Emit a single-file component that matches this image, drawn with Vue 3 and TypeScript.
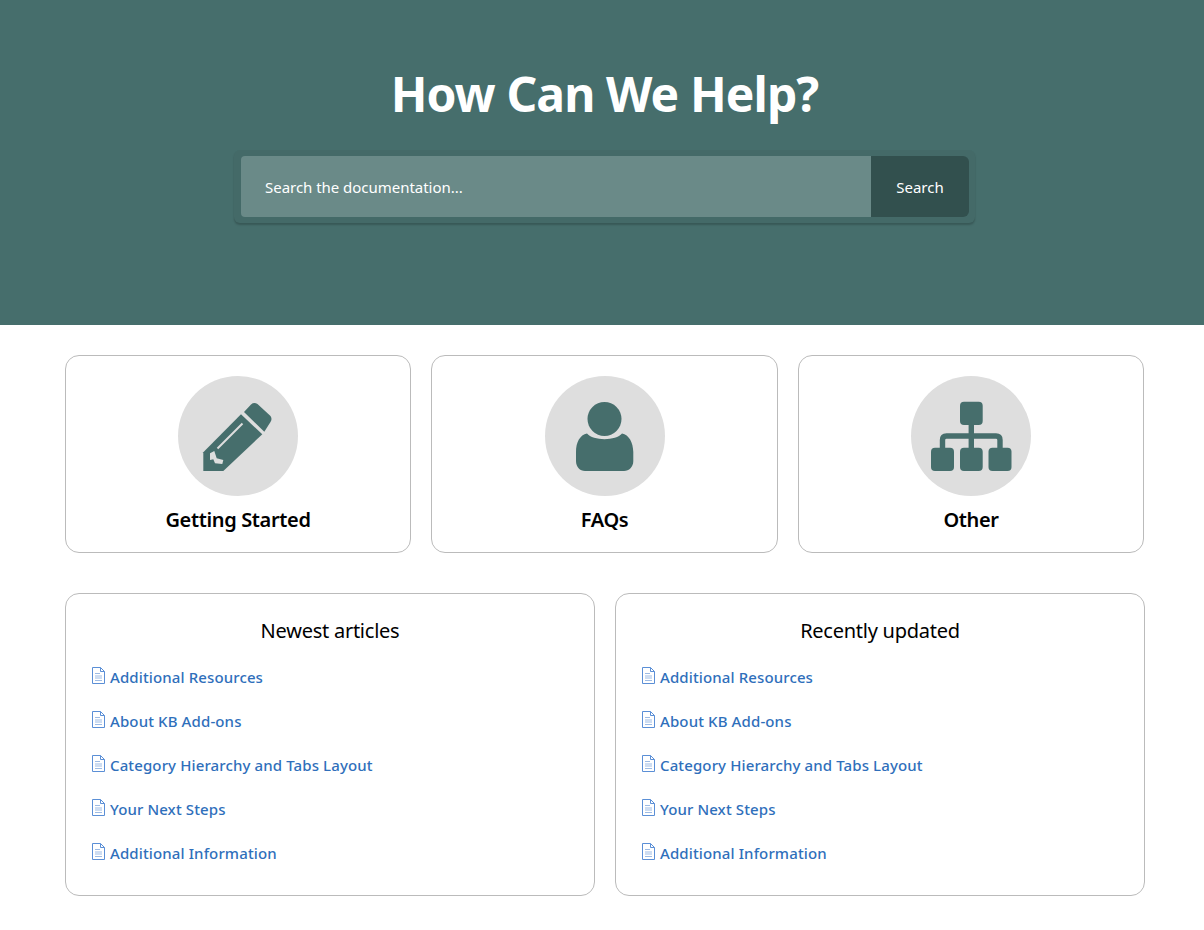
<script setup lang="ts">
const cats = [
  { name: 'Getting Started', icon: 'pencil' },
  { name: 'FAQs', icon: 'person' },
  { name: 'Other', icon: 'org' },
];
const articles = [
  'Additional Resources',
  'About KB Add-ons',
  'Category Hierarchy and Tabs Layout',
  'Your Next Steps',
  'Additional Information',
];
const boxes = ['Newest articles', 'Recently updated'];
</script>

<template>
  <div class="page">
    <header class="hero">
      <h1>How Can We Help?</h1>
      <div class="search">
        <div class="search-input">Search the documentation...</div>
        <button class="search-btn">Search</button>
      </div>
    </header>

    <main class="content">
      <section class="cats">
        <a v-for="c in cats" :key="c.name" class="cat">
          <span class="circle">
            <svg width="120" height="120" viewBox="0 0 120 120">
              <g v-if="c.icon === 'pencil'">
                <path d="M25.3 95V76.3L63 38.3 84.3 58.3 45.3 95Z" fill="#466e6c" />
                <path d="M66 36L73 28.5Q76 26 79.5 28L92.5 40Q94.5 43 92.5 46L86.3 55.7Z" fill="#466e6c" />
                <path d="M39.5 72.5L64.5 47.5" stroke="#dedede" stroke-width="2" fill="none" />
                <path d="M32 77.3L36.3 75 38.7 82.3 45.3 84 44.3 88 37 87.3 35.3 83.3 32 84Z" fill="#dedede" />
              </g>
              <g v-else-if="c.icon === 'person'">
                <circle cx="59.5" cy="43" r="17" fill="#466e6c" />
                <path d="M42 57.5C48 65 71 65 77 57.5 84 59 88 66 88.3 76V85C88.3 91 84 95 79 95H40C35 95 31 91 31 85V76C31 66 35 59 42 57.5Z" fill="#466e6c" />
              </g>
              <g v-else>
                <rect x="49" y="25.7" width="22.7" height="23.3" rx="4" fill="#466e6c" />
                <rect x="20" y="71.7" width="23" height="23.3" rx="4" fill="#466e6c" />
                <rect x="49" y="71.7" width="22.7" height="23.3" rx="4" fill="#466e6c" />
                <rect x="77.5" y="71.7" width="23" height="23.3" rx="4" fill="#466e6c" />
                <path d="M60.3 49V72M31.5 72V64Q31.5 60 35.5 60H85Q89 60 89 64V72" stroke="#466e6c" stroke-width="5.4" fill="none" />
              </g>
            </svg>
          </span>
          <span class="cat-name">{{ c.name }}</span>
        </a>
      </section>

      <section class="lists">
        <div v-for="b in boxes" :key="b" class="box">
          <h2>{{ b }}</h2>
          <ul>
            <li v-for="a in articles" :key="a">
              <svg class="doc" width="13" height="17" viewBox="0 0 13 17">
                <path d="M.5.5H8.5L12.5 4.5V16.5H.5Z" fill="#fff" stroke="#5b8fd6" />
                <path d="M8.5 .5V4.5H12.5" fill="none" stroke="#5b8fd6" />
                <path d="M3 6.5H8M3 9H10M3 11H10M3 13.5H10" stroke="#9dbbe4" />
              </svg>
              <a>{{ a }}</a>
            </li>
          </ul>
        </div>
      </section>
    </main>
  </div>
</template>

<style>
html, body {
  margin: 0;
  background: #fff;
}
</style>

<style scoped>
.page {
  font-family: "Noto Sans", "Open Sans", sans-serif;
  height: 930px;
  overflow: hidden;
}
.hero {
  height: 325px;
  box-sizing: border-box;
  background: #466e6c;
  padding: 60px 0 0 5px;
  display: flex;
  flex-direction: column;
  align-items: center;
}
h1 {
  margin: 0 0 22px;
  font-size: 48px;
  line-height: 68px;
  font-weight: 700;
  letter-spacing: -0.9px;
  color: #fff;
}
.search {
  width: 741px;
  height: 73px;
  box-sizing: border-box;
  padding: 6px 6px 6px 7px;
  display: flex;
  background: #446a68;
  border-radius: 6px;
  box-shadow: 0 2px 2px rgba(0, 0, 0, 0.2);
}
.search-input {
  flex: 1;
  height: 61px;
  line-height: 62px;
  padding-left: 24px;
  background: #6a8a88;
  color: #fff;
  font-size: 15px;
  letter-spacing: -0.03px;
  border-radius: 4px 0 0 4px;
}
.search-btn {
  width: 98px;
  height: 61px;
  border: 0;
  padding: 0;
  background: #32504e;
  color: #fff;
  font: inherit;
  font-size: 15px;
  border-radius: 0 6px 6px 0;
}
.content {
  width: 1080px;
  margin-left: 65px;
}
.cats {
  display: grid;
  grid-template-columns: 346px 347px 346px;
  gap: 20px;
  margin-top: 30px;
}
.cat {
  height: 198px;
  box-sizing: border-box;
  border: 1px solid #bbb;
  border-radius: 14px;
  padding-top: 20px;
  display: flex;
  flex-direction: column;
  align-items: center;
}
.circle {
  width: 120px;
  height: 120px;
  border-radius: 50%;
  background: #dedede;
}
.circle svg {
  display: block;
}
.cat-name {
  margin-top: 10px;
  font-size: 20px;
  line-height: 28px;
  font-weight: 600;
  letter-spacing: -0.35px;
  color: #000;
}
.lists {
  display: grid;
  grid-template-columns: repeat(2, 1fr);
  gap: 20px;
  margin-top: 40px;
}
.box {
  height: 303px;
  box-sizing: border-box;
  border: 1px solid #bbb;
  border-radius: 14px;
  padding: 21px 25px 0;
}
h2 {
  margin: 0;
  text-align: center;
  font-size: 20px;
  line-height: 32px;
  font-weight: 400;
  letter-spacing: -0.25px;
  color: #000;
}
ul {
  list-style: none;
  margin: 8px 0 0;
  padding: 0;
}
li {
  height: 44px;
  display: flex;
  align-items: center;
  gap: 6px;
}
.doc {
  flex: none;
  margin-left: 1px;
  margin-top: -3px;
  margin-right: -1px;
}
li a {
  color: #2f6fbb;
  font-size: 15px;
  font-weight: 500;
  letter-spacing: 0.12px;
}
</style>
